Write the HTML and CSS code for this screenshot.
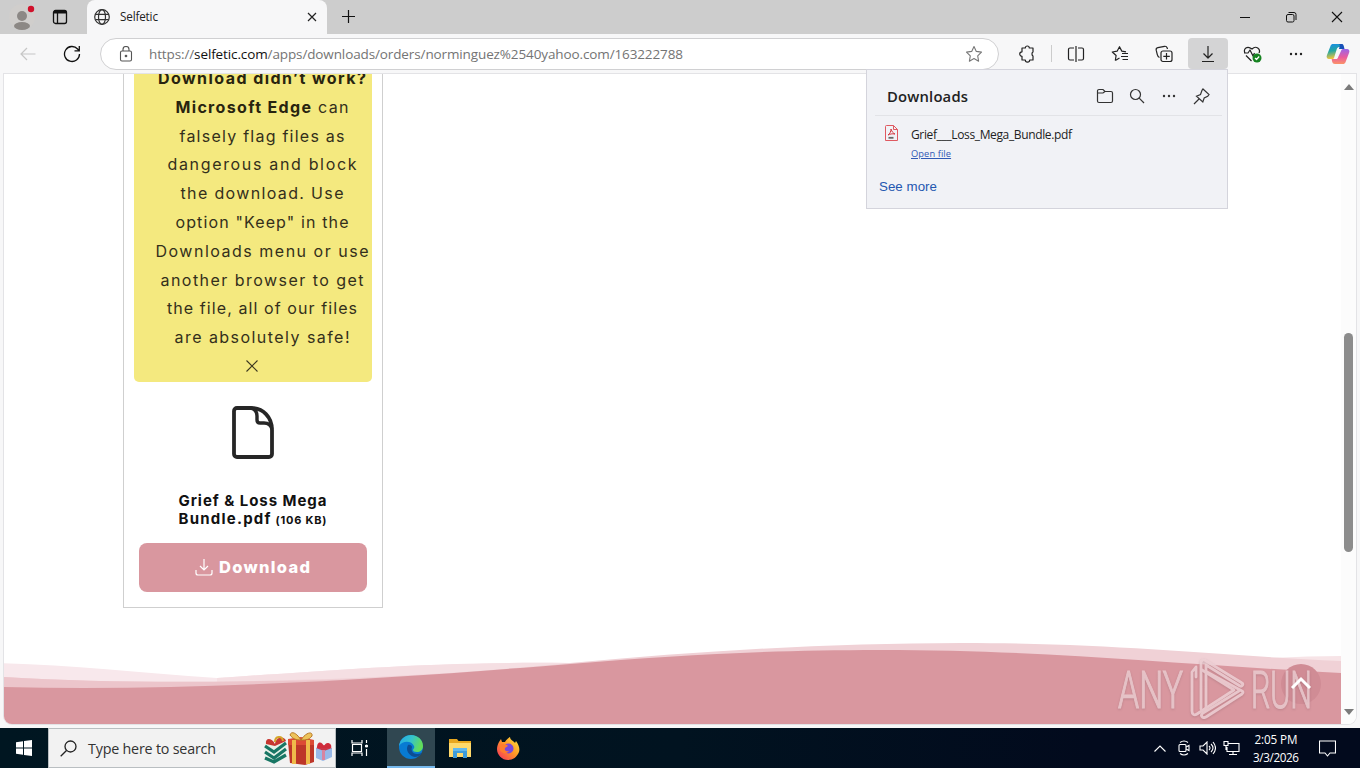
FILE: index.html
```html
<!DOCTYPE html>
<html lang="en">
<head>
<meta charset="utf-8">
<title>Selfetic</title>
<link rel="stylesheet" href="styles.css">
</head>
<body>
<header class="titlebar">
  <div class="profile"><svg width="28" height="28" viewBox="0 0 28 28"><circle cx="14" cy="14" r="13" fill="#d0cecc"/><circle cx="14" cy="13" r="5" fill="#8c8885"/><ellipse cx="14" cy="23" rx="8" ry="4" fill="#8c8885"/><circle cx="23" cy="6" r="3.200" fill="#d0112b"/></svg></div>
  <svg class="tabs-icon" width="16" height="16" viewBox="0 0 16 16" fill="none" stroke="#111" stroke-width="1.3"><rect x="1.5" y="1.5" width="13" height="13" rx="2"/><path d="M2 3h12" stroke-width="3"/><path d="M5.5 4v10"/></svg>
  <div class="tab">
    <svg width="16" height="16" viewBox="0 0 16 16" fill="none" stroke="#333" stroke-width="1.2"><circle cx="8" cy="8" r="7.3"/><ellipse cx="8" cy="8" rx="3.5" ry="7.3"/><path d="M1.4 5.3h13.2M1.4 10.7h13.2"/></svg>
    <span class="tab-name" data-w="38">Selfetic</span>
    <svg class="tab-close" width="10" height="10" viewBox="0 0 10 10" stroke="#222" stroke-width="1.2"><path d="M1 1l8 8M9 1l-8 8"/></svg>
  </div>
  <svg class="new-tab" width="14" height="14" viewBox="0 0 14 14" stroke="#111" stroke-width="1.2"><path d="M6.500 0v13M0 6.500h13"/></svg>
  <div class="window-buttons">
    <svg width="12" height="12" viewBox="0 0 12 12" stroke="#111"><path d="M1 6.5h10"/></svg>
    <svg width="12" height="12" viewBox="0 0 12 12" fill="none" stroke="#111"><rect x="1.5" y="3.5" width="7.5" height="7.5" rx="1.5"/><path d="M3.5 1.5H9A2 2 0 0 1 11 3.500V9"/></svg>
    <svg width="12" height="12" viewBox="0 0 12 12" stroke="#111" stroke-width="1.1"><path d="M1 1l10 10M11 1L1 11"/></svg>
  </div>
</header>

<nav class="toolbar">
  <svg class="back" width="16" height="14" viewBox="0 0 16 14" fill="none" stroke="#c6c6c6" stroke-width="1.2"><path d="M15.500 7H1M7 1L1 7l6 6"/></svg>
  <svg class="reload" width="18" height="18" viewBox="0 0 18 18" fill="none" stroke="#111" stroke-width="1.300"><path d="M16.500 9A7.500 7.500 0 1 1 14.600 4l1.400 1.600M16.300 1v4.800h-4.800"/></svg>
  <div class="address">
    <svg width="14" height="16" viewBox="0 0 14 16" fill="none" stroke="#555" stroke-width="1.1"><rect x="1.500" y="5" width="11" height="10" rx="1.500"/><path d="M4 5V3.500a3 3 0 0 1 6 0V5"/><circle cx="7" cy="10" r=".8" fill="#555"/></svg>
    <span class="url" data-w="534">https://<b>selfetic.com</b>/apps/downloads/orders/norminguez%2540yahoo.com/163222788</span>
    <svg class="star" width="18" height="18" viewBox="0 0 18 18" fill="none" stroke="#777" stroke-width="1.1" stroke-linejoin="round"><path d="M9 1.500l2.300 4.900 5.200.7-3.800 3.700.9 5.400L9 13.600l-4.600 2.600.9-5.400L1.500 7.100l5.200-.7z"/></svg>
  </div>
  <div class="tools">
    <svg class="tool puzzle" width="18" height="18" viewBox="0 0 18 18"><path d="M6 3h1.300a2 2 0 0 1 4 0H15v4a2 2 0 0 0-1 2 2 2 0 0 0 1 2v4h-3.300a2 2 0 0 1-4.400 0H4v-3.700a2.200 2.200 0 1 1 0-4.500V3h2"/></svg>
    <i class="divider"></i>
    <svg class="tool split" width="18" height="18" viewBox="0 0 18 18"><path d="M9 1v16M7 3H3a1.500 1.500 0 0 0-1.500 1.500v9A1.500 1.500 0 0 0 3 15h4M11 3h4a1.500 1.500 0 0 1 1.500 1.500v9A1.500 1.500 0 0 1 15 15h-4"/></svg>
    <svg class="tool favs" width="18" height="18" viewBox="0 0 18 18"><path d="M4.300 15.500L8.500 13M4.300 15.500l.8-5L1.300 7l4.800-.8L8.500 1.700l2.300 4.400 4.200.8M11 8.500h6M10 11.500h7M11.500 14.500H17"/></svg>
    <svg class="tool collections" width="18" height="18" viewBox="0 0 18 18"><path d="M4.500 12.500C3 12 2.600 11 2.300 9.700L1.200 5.200C.9 3.700 1.500 3 2.900 2.700l6.600-1.400c1.300-.2 2.200.2 2.700 1.700l.3 1"/><rect x="6" y="6" width="11" height="10.500" rx="2"/><path d="M11.500 8v6.500M8.300 11.300h6.500"/></svg>
    <div class="active-tool"><svg class="tool" width="16" height="18" viewBox="0 0 16 18"><path d="M8 1v12M3.500 8.500L8 13l4.500-4.500M2 16.500h12"/></svg></div>
    <svg class="tool heart" width="19" height="18" viewBox="0 0 19 18"><path d="M2 8C0 4 4 0 9 4c4-4 9 0 7 4M1 8h4l2-3 3 6 1.500-3M3 10.500l5.500 5.500"/><circle cx="14" cy="13" r="4.500" fill="#168321" stroke="none"/><path d="M12 13l1.500 1.500 2.700-3" stroke="#fff"/></svg>
    <svg class="dots" width="16" height="4" viewBox="0 0 16 4"><circle cx="3" cy="2" r="1.200"/><circle cx="8" cy="2" r="1.200"/><circle cx="13" cy="2" r="1.200"/></svg>
    <svg class="copilot" width="24" height="22" viewBox="0 0 24 22"><defs><linearGradient id="ca" x2="0.2" y2="1"><stop stop-color="#178bec"/><stop offset=".5" stop-color="#24a7a0"/><stop offset="1" stop-color="#f3c43b"/></linearGradient><linearGradient id="cb" y1="0" x2="0" y2="1"><stop stop-color="#9b65e8"/><stop offset=".55" stop-color="#ea5c9d"/><stop offset="1" stop-color="#fb9368"/></linearGradient></defs><path d="M7 1h8c2 0 2 1 2.600 3H13c-1 0-1.800 1-2.200 2L8 15c-.6 1-1 1-2 1H3c-2 0-3-2-2-4L4.500 3C5 1.500 6 1 7 1z" fill="url(#ca)"/><path d="M13 1h3c1 0 1.600 1 2 3l.5 2H13l1-4z" fill="#1750b8"/><path d="M18 6h3c2 0 3 2 2 4l-3.400 9c-.6 1.600-1.500 2-2.600 2H9c-2 0-2.500-1-3-3l-.3-2H10c1.200 0 1.800-.6 2.200-2L15 8c.5-1.500 1-2 3-2z" fill="url(#cb)"/></svg>
  </div>
</nav>

<main class="frame">
  <div class="page">
    <section class="product">
      <div class="notice">
        <p><b data-w="208">Download didn’t work?</b></p>
        <p><span data-w="173"><b>Microsoft Edge</b> can</span></p>
        <p><span data-w="165">falsely flag files as</span></p>
        <p><span data-w="189">dangerous and block</span></p>
        <p><span data-w="163">the download. Use</span></p>
        <p><span data-w="173">option "Keep" in the</span></p>
        <p><span data-w="213">Downloads menu or use</span></p>
        <p><span data-w="203">another browser to get</span></p>
        <p><span data-w="190">the file, all of our files</span></p>
        <p><span data-w="175">are absolutely safe!</span></p>
        <p class="dismiss"><svg width="12" height="12" viewBox="0 0 12 12" stroke="#3c3820" stroke-width="1.100"><path d="M.5.5l11 11M11.500.5l-11 11"/></svg></p>
      </div>
      <svg class="file-icon" width="42" height="53" viewBox="0 0 42 53" fill="none" stroke="#262626" stroke-width="3.800" stroke-linejoin="round"><path d="M5 2h14c12 0 21 9 21 22v24a3 3 0 0 1-3 3H5a3 3 0 0 1-3-3V5a3 3 0 0 1 3-3z"/><path d="M19 2c4 1 6 4 6 8v4c0 2 1 3 3 3h4c4 0 7 2 8 6" stroke-width="3.400"/></svg>
      <h3 class="file-name"><span data-w="148">Grief &amp; Loss Mega</span><span class="second"><span data-w="92">Bundle.pdf</span><small data-w="51">(106 KB)</small></span></h3>
      <button class="download"><svg width="18" height="17" viewBox="0 0 18 17" fill="none" stroke="#fff" stroke-width="1.200"><path d="M9 0v11M5 7l4 4 4-4M1 11v3q0 2 2 2h12q2 0 2-2v-3"/></svg><span data-w="91">Download</span></button>
    </section>
    <svg class="waves" width="1337" height="84" viewBox="4 640 1337 84">
      <path d="M4 663.300C70 665 140 673 217 678C310 672 430 661 570 663L570 700H4z" fill="#f8e8ec"/>
      <path d="M217 678C310 672 430 661 570 663L450 690L217 682z" fill="#f5dfe3"/>
      <path d="M1270 658Q1310 656 1341 656V680H1270z" fill="#f7e4e7"/>
      <path d="M4 677C110 683 200 683 330 679C430 675 510 669 570 663C700 651 830 643 962 643C1120 643 1220 656 1341 661V724H4z" fill="#f0d1d6"/>
      <path d="M4 677C110 683 200 683 380 679L300 695H4z" fill="#ecc5cb"/>
      <path d="M4 687C210 692 420 676 570 664C680 655 770 650 880 650C1050 650 1170 664 1341 673V724H4z" fill="#d9979f"/>
      <circle cx="1301" cy="684" r="20" fill="#d08c95"/>
    </svg>
  </div>
  <div class="scrollbar"><i class="up"></i><i class="thumb"></i><i class="down"></i></div>
</main>

<aside class="downloads">
  <div class="downloads-head">
    <h2 data-w="81">Downloads</h2>
    <div class="downloads-tools">
      <svg width="18" height="16" viewBox="0 0 18 16"><path d="M1.500 4V3A1.500 1.500 0 0 1 3 1.500h4L9 3.500h6A1.500 1.500 0 0 1 16.500 5v8A1.500 1.500 0 0 1 15 14.500H3A1.500 1.500 0 0 1 1.500 13zM1.500 5H7l2-1.500"/></svg>
      <svg width="16" height="16" viewBox="0 0 16 16"><circle cx="6.500" cy="6.500" r="5"/><path d="M10.200 10.200L15 15"/></svg>
      <svg class="dots" width="16" height="4" viewBox="0 0 16 4"><circle cx="3" cy="2" r="1.200"/><circle cx="8" cy="2" r="1.200"/><circle cx="13" cy="2" r="1.200"/></svg>
      <svg width="17" height="17" viewBox="0 0 17 17"><path d="M10 1l6 5.500-1.300 1.800-3.500 1.700-1.400 4L3.500 8.200l4-1.700L9 2.300zM6 11L1 16"/></svg>
    </div>
  </div>
  <div class="download-row">
    <svg width="13" height="16" viewBox="0 0 13 16" fill="none" stroke="#df5960"><path d="M1.500.5h7l4 4v11h-12V1.500q0-1 1-1z"/><path d="M8.500.5v4h4"/><path d="M3 10c2-1 3-4 3-6 1 3 2 4 4 5-3-.5-5 0-7 1z" stroke="#d43840"/><path d="M3.500 12.800h5" stroke="#666" stroke-width="1.800"/></svg>
    <div class="download-info"><span data-w="161">Grief___Loss_Mega_Bundle.pdf</span><a data-w="40">Open file</a></div>
  </div>
  <a class="see-more" data-w="58">See more</a>
</aside>

<svg class="watermark" width="200" height="66" viewBox="1116 656 200 66">
  <g class="mark-text"><text x="1118" y="708" textLength="65" lengthAdjust="spacingAndGlyphs">ANY</text><text x="1251" y="708" textLength="61" lengthAdjust="spacingAndGlyphs">RUN</text></g>
  <g class="mark-logo"><path d="M1196 677V667l-4 5v39c0 3 2 5 5 3l37-24-32-20"/><path d="M1201 709v-46c0-3 3-4 5-2l36 22c2 1 0 4-2 3l-34-21v45"/><path d="M1207 672l35 19q2 1 0 3l-36 23c-4 2-6-2-3-4l36-22"/></g>
  <path d="M1292 688l9-9 9 9" fill="none" stroke="#fff" stroke-width="3"/>
</svg>

<footer class="taskbar">
  <div class="start"><svg width="16" height="16" viewBox="0 0 16 16" fill="#fff"><path d="M0 2.300L7 1.300V7.500H0zM8 1.100L16 0V7.500H8zM0 8.500H7V14.700L0 13.700zM8 8.500H16V16L8 14.900z"/></svg></div>
  <div class="search">
    <svg width="17" height="17" viewBox="0 0 17 17" fill="none" stroke="#222" stroke-width="1.300"><circle cx="10.500" cy="6.500" r="5.500"/><path d="M6.500 10.500L.7 16.300"/></svg>
    <span data-w="128">Type here to search</span>
    <svg class="gifts" width="70" height="36" viewBox="262 730 70 36">
      <path d="M264 742l11 4 10-6v18l-11 5-10-3z" fill="#e7f2e8"/><path d="M264 746l9 6 12-9M264 752l9 6 12-9M264 758l9 4 12-7" fill="none" stroke="#187664" stroke-width="3.200"/><path d="M265 744c-1-7 6-6 9 0 1-8 10-8 11-3l-11 5z" fill="#c73731"/><path d="M274 742c0-6 7-7 8-1" fill="none" stroke="#d5a42b" stroke-width="2"/>
      <path d="M287 742h26v20l-9 3-15-2z" fill="#bd3729"/><path d="M287 739l13-2 13 3v5h-26z" fill="#dc4b35"/><path d="M291 740h4v24h-4zM305 740h4v24h-4z" fill="#efbb4a"/><path d="M300 740c-5-8-10-9-11-5 3 4 6 5 11 5 5-8 12-9 11-4-3 4-6 4-11 4z" fill="#edc35b" stroke="#b77725"/>
      <path d="M315 748h16v9l-9 4-7-3z" fill="#98b9e8"/><path d="M315 748l8-3 8 3-8 3z" fill="#ca3547"/><path d="M316 748c0-8 6-6 7-1 1-7 9-4 7 1z" fill="#cf2c3b"/><path d="M321 750h3v10h-3z" fill="#d884a0"/>
    </svg>
  </div>
  <div class="app"><svg width="18" height="16" viewBox="0 0 18 16" fill="none" stroke="#fff" stroke-width="1.200"><path d="M1 0v3h10V0M1 16v-3h10v3M1.500 4.500h9v7h-9zM15.500 0v3M15.500 9v7"/><circle cx="15.500" cy="6" r="1" fill="#fff"/></svg></div>
  <div class="app current"><svg width="24" height="24" viewBox="0 0 24 24"><defs><linearGradient id="e1" x1="0" y1="0" x2="1" y2=".3"><stop stop-color="#22a9ea"/><stop offset=".55" stop-color="#36c3ca"/><stop offset="1" stop-color="#63dd59"/></linearGradient></defs><circle cx="12" cy="12" r="12" fill="#087bd3"/><path d="M0 11C1 4 6 0 12 0c7 0 12 5 12 11 0 4-3 6-6 6-3 0-4-1-4-2s2-2 1-4C13 6 4 5 0 11z" fill="url(#e1)"/><path d="M9 10c-3 5 1 11 7 12 2 0 5-1 7-4-5 2-9 1-10-2-1-2 0-3 0-4s-2-3-4-2z" fill="#0c4d94"/></svg></div>
  <div class="app"><svg width="22" height="20" viewBox="0 0 22 20"><path d="M0 1h8l1.500 2H22v16H0z" fill="#e9a71e"/><path d="M0 5h22v14H0z" fill="#ffd96b"/><path d="M4 10h14v10h-4v-5H8v5H4z" fill="#3d9cda"/><path d="M4 10h14v3H4z" fill="#62b8ed"/></svg></div>
  <div class="app"><svg width="23" height="23" viewBox="0 0 23 23"><defs><linearGradient id="f1" x1="1" y1="0" x2="0" y2="1"><stop stop-color="#ffe945"/><stop offset=".45" stop-color="#ff9b25"/><stop offset="1" stop-color="#f72a61"/></linearGradient></defs><path d="M2 5l2-3 1 3 3 0c1-2 3-4 5-5 0 3 4 4 5 6l1-2c3 4 4 8 3 11-2 5-6 8-11 8C5 23 0 18 0 12c0-3 1-5 2-7z" fill="url(#f1)"/><circle cx="11.500" cy="11.500" r="5" fill="#7848dc"/><path d="M3 8c3-2 5 0 7 0l1 1-3 2c-1 2 1 4 4 3-2 3-7 3-9-1z" fill="#ff7d2d"/></svg></div>
  <div class="tray">
    <svg width="12" height="7" viewBox="0 0 12 7"><path d="M.5 6.500L6 1l5.500 5.500"/></svg>
    <svg width="14" height="16" viewBox="0 0 14 16"><rect x="2" y="4.500" width="7" height="7" rx="1"/><path d="M9 7l3-1.500v5L9 9M3 2.500q4-3 8 0M3 13.500q4 3 8 0"/></svg>
    <svg width="17" height="14" viewBox="0 0 17 14"><path d="M1 5v4h3l4 4V1L4 5zM10 5q2 2 0 4M12 3q4 4 0 8M14 1q5 6 0 12"/></svg>
    <svg width="17" height="14" viewBox="0 0 17 14"><path d="M5 2.500h11v8H4V6M6 13.500h8M10 10.500v3M1 .5h4v4H1zM3 4.500V9"/></svg>
    <div class="clock"><span data-w="43">2:05 PM</span><span data-w="46">3/3/2026</span></div>
    <svg class="message" width="17" height="17" viewBox="0 0 17 17"><path d="M.5 1h16v12H11l-2.500 3L6 13H.5z"/></svg>
  </div>
</footer>
<script src="fit.js"></script>
</body>
</html>
```

FILE: styles.css
```css
* { box-sizing: border-box; }
body { margin: 0; width: 1360px; height: 768px; overflow: hidden; display: grid; grid-template-rows: 34px 40px 650px 4px 40px; position: relative; background: #f7f7f8; color: #222; font-family: "Open Sans", "Noto Sans", sans-serif; }
svg { display: block; flex: none; }
p, h2, h3 { margin: 0; }
[data-w] { display: inline-block; white-space: pre; }
.titlebar { background: #cdcdcd; display: flex; align-items: center; }
.profile { margin-left: 8px; }
.tabs-icon { margin-left: 16px; }
.tab { margin-left: 19px; height: 34px; width: 240px; padding: 0 10px 0 7px; display: flex; align-items: center; background: #f7f7f8; border-radius: 8px 8px 0 0; }
.tab-name { margin-left: 10px; padding-bottom: 2px; font-size: 11.7px; }
.tab-close { margin-left: auto; }
.new-tab { margin-left: 15px; }
.window-buttons { margin-left: auto; padding-right: 17px; display: flex; gap: 34px; }
.toolbar { display: flex; align-items: center; padding-bottom: 1px; }
.back { margin-left: 20px; }
.reload { margin-left: 27px; }
.address { margin-left: 19px; width: 899px; height: 32px; border: 1px solid #d0d0d2; border-radius: 16px; background: #fff; display: flex; align-items: center; padding: 0 15px 0 18px; }
.url { margin-left: 16px; color: #747474; font-size: 13.5px; }
.url b { color: #111; font-weight: 400; }
.star { margin-left: auto; }
.tools { display: flex; align-items: center; }
.tool { fill: none; stroke: #222; stroke-width: 1.2; stroke-linejoin: round; }
.puzzle { margin-left: 19px; }
.divider { width: 1px; height: 17px; background: #ccc; margin-left: 15px; }
.split { margin-left: 15px; }
.favs { margin-left: 26px; }
.collections { margin-left: 26px; }
.active-tool { margin-left: 15px; width: 40px; height: 31px; background: #d4d4d5; border-radius: 4px; display: grid; place-items: center; }
.heart { margin-left: 15px; }
.dots { fill: #222; }
.tools .dots { margin-left: 26px; }
.copilot { margin-left: 22px; }
.frame { margin: 0 4px; display: flex; background: #fff; border-radius: 0 0 8px 8px; overflow: hidden; box-shadow: 0 0 0 1px #e3e3e6; }
.page { width: 1337px; display: flex; flex-direction: column; }
.product { margin-left: 119px; width: 260px; height: 534px; padding: 0 10px; border: 1px solid #cfcfcf; border-top: 0; display: flex; flex-direction: column; align-items: center; font-family: Inter, "Open Sans", sans-serif; overflow: hidden; }
.notice { width: 238px; margin-top: -10px; padding: 0 0 1.2px 18px; background: #f4e97f; border-radius: 5px; color: #332f1b; font-size: 16px; line-height: 28.8px; text-align: center; flex: none; }
.notice p { height: 28.8px; }
.notice b { color: #28240f; }
.dismiss { display: grid; place-items: center; padding: 0 20px 0 0; }
.file-icon { margin-top: 24px; }
.file-name { margin: 33px 1px 0 0; display: flex; flex-direction: column; font-size: 15px; line-height: 18px; color: #111; }
.second { display: flex; justify-content: space-between; align-items: baseline; }
.second small { font-size: 11px; }
.download { margin-top: 14px; flex: none; width: 228px; height: 49px; padding: 0 1px 0 0; border: 0; border-radius: 8px; background: #d9979f; color: #fff; display: flex; justify-content: center; align-items: center; gap: 6px; font: 800 16.5px Inter, sans-serif; }
.waves { margin-top: auto; }
.scrollbar { width: 15px; background: #fcfcfc; display: flex; flex-direction: column; align-items: center; }
.up, .down { border: 5px solid transparent; border-top-width: 0; border-bottom: 6px solid #7b7b7b; margin-top: 10px; }
.thumb { width: 9px; height: 219px; border-radius: 5px; background: #8c8c8c; margin-top: 243px; }
.down { border-top: 6px solid #7b7b7b; border-bottom-width: 0; margin-top: 157px; }
.downloads { position: absolute; left: 866px; top: 69px; width: 362px; height: 140px; background: #f1f2f6; border: 1px solid #d4d4dc; display: flex; flex-direction: column; align-items: flex-start; }
.downloads-head { align-self: stretch; margin: 0 5px 0 8px; height: 46px; padding: 7px 12px 0 12px; display: flex; align-items: center; justify-content: space-between; border-bottom: 1px solid #e2e3e7; }
.downloads h2 { font-size: 14.8px; font-weight: 600; }
.downloads-tools { display: flex; align-items: center; gap: 16px; }
.downloads-tools svg { fill: none; stroke: #333; stroke-width: 1.2; }
.downloads-tools svg:first-child { margin-right: -1px; }
.downloads-tools .dots { fill: #333; stroke: none; }
.download-row { margin: 9px 0 0 18px; display: flex; gap: 13px; align-items: flex-start; }
.download-info { display: flex; flex-direction: column; align-items: flex-start; font-size: 12px; line-height: 20px; }
.download-info a { font-size: 9.3px; line-height: 17px; color: #3159b5; text-decoration: underline; }
.see-more { margin: 16px 0 0 12px; font: 13.3px "Liberation Sans", sans-serif; line-height: 18px; color: #2457b0; }
.watermark { position: absolute; left: 1116px; top: 656px; overflow: visible; filter: drop-shadow(0 1px 1px #78505a55); }
.mark-text { font: 300 52px Roboto, sans-serif; fill: #eccdd1; stroke: #eccdd1; stroke-width: 1.2; opacity: .85; }
.mark-logo { fill: none; stroke: #efd2d6; stroke-width: 2.8; stroke-linejoin: round; stroke-linecap: round; opacity: .85; }
.taskbar { grid-row: 5; background: linear-gradient(90deg, #001621, #011320 50%, #020a1d 80%); display: flex; color: #fff; }
.start { width: 48px; display: grid; place-items: center; }
.search { width: 288px; background: #f2f2f2; border: 1px solid #b9bec1; color: #333; padding: 0 2px 0 11px; display: flex; align-items: center; font-size: 14.3px; }
.search span { margin-left: 11px; }
.gifts { margin-left: auto; }
.app { width: 49px; padding-right: 1px; display: grid; place-items: center; }
.app.current { width: 48px; margin-left: 2px; padding: 0; background: #304751; border-bottom: 2px solid #76b9ed; }
.current ~ .app { padding: 0; }
.tray { margin-left: auto; display: flex; align-items: center; padding-right: 24px; }
.tray svg { fill: none; stroke: #fff; stroke-width: 1.1; margin-right: 11px; }
.tray svg:nth-child(2) { margin-right: 8px; }
.tray svg:nth-child(3) { margin-right: 7px; }
.tray svg:nth-child(4) { margin-right: 12px; }
.clock { width: 48px; padding-bottom: 1px; display: flex; flex-direction: column; align-items: center; font-size: 11.7px; line-height: 18px; }
.tray .message { margin: 0 0 0 19px; }
```

FILE: fit.js
```js
// Tracks each label out or in so that it fills its data-w width.
document.querySelectorAll('[data-w]').forEach(function (el) {
  var natural = el.getBoundingClientRect().width;
  var gap = (Number(el.dataset.w) - natural) / (el.textContent.length - 1);
  el.style.letterSpacing = gap + 'px';
  el.style.marginRight = -gap + 'px';
});
```
